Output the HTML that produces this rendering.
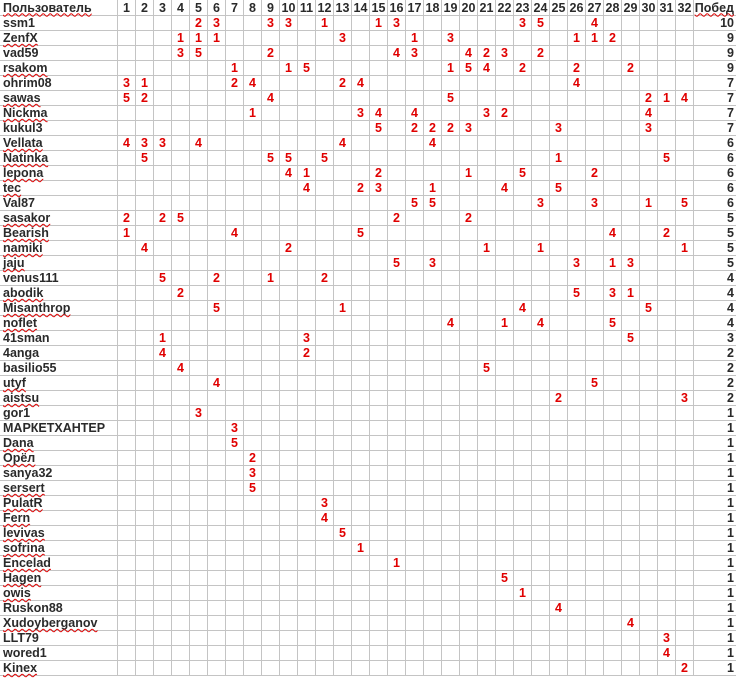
<!DOCTYPE html>
<html><head><meta charset="utf-8"><style>
html,body{margin:0;padding:0;background:#fff;width:736px;height:678px;overflow:hidden}
table{border-collapse:collapse;table-layout:fixed;width:737px;font-family:"Liberation Sans",Arial,sans-serif;font-weight:bold;font-size:12.5px;margin-left:-1px}
td,th{border:1px solid #c4c4c4;height:14px;padding:0;line-height:14px;text-align:center;color:#e00000;white-space:nowrap}
td{overflow:hidden}
th{text-align:left;color:#2a2a2a;padding-left:3px;font-weight:bold;overflow:visible}
td.w{text-align:right;color:#2a2a2a;padding-right:2px;overflow:visible}
tr.h td{color:#2a2a2a;height:15px}
tr.h th{height:15px}
tr:first-child td,tr:first-child th{border-top:none}
th{border-left:1px solid #333}
.u{text-decoration:underline wavy #e00000;text-decoration-thickness:1px;text-underline-offset:1px;text-decoration-skip-ink:none}
</style></head><body>
<table>
<colgroup><col style="width:118px"><col span="32" style="width:18px"><col style="width:43px"></colgroup>
<tr class="h"><th><span class="u">Пользователь</span></th><td>1<td>2<td>3<td>4<td>5<td>6<td>7<td>8<td>9<td>10<td>11<td>12<td>13<td>14<td>15<td>16<td>17<td>18<td>19<td>20<td>21<td>22<td>23<td>24<td>25<td>26<td>27<td>28<td>29<td>30<td>31<td>32<td class="w"><span class="u">Побед</span></td></tr>
<tr><th>ssm1</th><td><td><td><td><td>2<td>3<td><td><td>3<td>3<td><td>1<td><td><td>1<td>3<td><td><td><td><td><td><td>3<td>5<td><td><td>4<td><td><td><td><td><td class="w">10</td></tr>
<tr><th><span class="u">ZenfX</span></th><td><td><td><td>1<td>1<td>1<td><td><td><td><td><td><td>3<td><td><td><td>1<td><td>3<td><td><td><td><td><td><td>1<td>1<td>2<td><td><td><td><td class="w">9</td></tr>
<tr><th>vad59</th><td><td><td><td>3<td>5<td><td><td><td>2<td><td><td><td><td><td><td>4<td>3<td><td><td>4<td>2<td>3<td><td>2<td><td><td><td><td><td><td><td><td class="w">9</td></tr>
<tr><th><span class="u">rsakom</span></th><td><td><td><td><td><td><td>1<td><td><td>1<td>5<td><td><td><td><td><td><td><td>1<td>5<td>4<td><td>2<td><td><td>2<td><td><td>2<td><td><td><td class="w">9</td></tr>
<tr><th>ohrim08</th><td>3<td>1<td><td><td><td><td>2<td>4<td><td><td><td><td>2<td>4<td><td><td><td><td><td><td><td><td><td><td><td>4<td><td><td><td><td><td><td class="w">7</td></tr>
<tr><th><span class="u">sawas</span></th><td>5<td>2<td><td><td><td><td><td><td>4<td><td><td><td><td><td><td><td><td><td>5<td><td><td><td><td><td><td><td><td><td><td>2<td>1<td>4<td class="w">7</td></tr>
<tr><th><span class="u">Nickma</span></th><td><td><td><td><td><td><td><td>1<td><td><td><td><td><td>3<td>4<td><td>4<td><td><td><td>3<td>2<td><td><td><td><td><td><td><td>4<td><td><td class="w">7</td></tr>
<tr><th>kukul3</th><td><td><td><td><td><td><td><td><td><td><td><td><td><td><td>5<td><td>2<td>2<td>2<td>3<td><td><td><td><td>3<td><td><td><td><td>3<td><td><td class="w">7</td></tr>
<tr><th><span class="u">Vellata</span></th><td>4<td>3<td>3<td><td>4<td><td><td><td><td><td><td><td>4<td><td><td><td><td>4<td><td><td><td><td><td><td><td><td><td><td><td><td><td><td class="w">6</td></tr>
<tr><th><span class="u">Natinka</span></th><td><td>5<td><td><td><td><td><td><td>5<td>5<td><td>5<td><td><td><td><td><td><td><td><td><td><td><td><td>1<td><td><td><td><td><td>5<td><td class="w">6</td></tr>
<tr><th><span class="u">lepona</span></th><td><td><td><td><td><td><td><td><td><td>4<td>1<td><td><td><td>2<td><td><td><td><td>1<td><td><td>5<td><td><td><td>2<td><td><td><td><td><td class="w">6</td></tr>
<tr><th><span class="u">tec</span></th><td><td><td><td><td><td><td><td><td><td><td>4<td><td><td>2<td>3<td><td><td>1<td><td><td><td>4<td><td><td>5<td><td><td><td><td><td><td><td class="w">6</td></tr>
<tr><th>Val87</th><td><td><td><td><td><td><td><td><td><td><td><td><td><td><td><td><td>5<td>5<td><td><td><td><td><td>3<td><td><td>3<td><td><td>1<td><td>5<td class="w">6</td></tr>
<tr><th><span class="u">sasakor</span></th><td>2<td><td>2<td>5<td><td><td><td><td><td><td><td><td><td><td><td>2<td><td><td><td>2<td><td><td><td><td><td><td><td><td><td><td><td><td class="w">5</td></tr>
<tr><th><span class="u">Bearish</span></th><td>1<td><td><td><td><td><td>4<td><td><td><td><td><td><td>5<td><td><td><td><td><td><td><td><td><td><td><td><td><td>4<td><td><td>2<td><td class="w">5</td></tr>
<tr><th><span class="u">namiki</span></th><td><td>4<td><td><td><td><td><td><td><td>2<td><td><td><td><td><td><td><td><td><td><td>1<td><td><td>1<td><td><td><td><td><td><td><td>1<td class="w">5</td></tr>
<tr><th><span class="u">jaju</span></th><td><td><td><td><td><td><td><td><td><td><td><td><td><td><td><td>5<td><td>3<td><td><td><td><td><td><td><td>3<td><td>1<td>3<td><td><td><td class="w">5</td></tr>
<tr><th>venus111</th><td><td><td>5<td><td><td>2<td><td><td>1<td><td><td>2<td><td><td><td><td><td><td><td><td><td><td><td><td><td><td><td><td><td><td><td><td class="w">4</td></tr>
<tr><th><span class="u">abodik</span></th><td><td><td><td>2<td><td><td><td><td><td><td><td><td><td><td><td><td><td><td><td><td><td><td><td><td><td>5<td><td>3<td>1<td><td><td><td class="w">4</td></tr>
<tr><th><span class="u">Misanthrop</span></th><td><td><td><td><td><td>5<td><td><td><td><td><td><td>1<td><td><td><td><td><td><td><td><td><td>4<td><td><td><td><td><td><td>5<td><td><td class="w">4</td></tr>
<tr><th><span class="u">noflet</span></th><td><td><td><td><td><td><td><td><td><td><td><td><td><td><td><td><td><td><td>4<td><td><td>1<td><td>4<td><td><td><td>5<td><td><td><td><td class="w">4</td></tr>
<tr><th>41sman</th><td><td><td>1<td><td><td><td><td><td><td><td>3<td><td><td><td><td><td><td><td><td><td><td><td><td><td><td><td><td><td>5<td><td><td><td class="w">3</td></tr>
<tr><th>4anga</th><td><td><td>4<td><td><td><td><td><td><td><td>2<td><td><td><td><td><td><td><td><td><td><td><td><td><td><td><td><td><td><td><td><td><td class="w">2</td></tr>
<tr><th>basilio55</th><td><td><td><td>4<td><td><td><td><td><td><td><td><td><td><td><td><td><td><td><td><td>5<td><td><td><td><td><td><td><td><td><td><td><td class="w">2</td></tr>
<tr><th><span class="u">utyf</span></th><td><td><td><td><td><td>4<td><td><td><td><td><td><td><td><td><td><td><td><td><td><td><td><td><td><td><td><td>5<td><td><td><td><td><td class="w">2</td></tr>
<tr><th><span class="u">aistsu</span></th><td><td><td><td><td><td><td><td><td><td><td><td><td><td><td><td><td><td><td><td><td><td><td><td><td>2<td><td><td><td><td><td><td>3<td class="w">2</td></tr>
<tr><th>gor1</th><td><td><td><td><td>3<td><td><td><td><td><td><td><td><td><td><td><td><td><td><td><td><td><td><td><td><td><td><td><td><td><td><td><td class="w">1</td></tr>
<tr><th>МАРКЕТХАНТЕР</th><td><td><td><td><td><td><td>3<td><td><td><td><td><td><td><td><td><td><td><td><td><td><td><td><td><td><td><td><td><td><td><td><td><td class="w">1</td></tr>
<tr><th><span class="u">Dana</span></th><td><td><td><td><td><td><td>5<td><td><td><td><td><td><td><td><td><td><td><td><td><td><td><td><td><td><td><td><td><td><td><td><td><td class="w">1</td></tr>
<tr><th><span class="u">Орёл</span></th><td><td><td><td><td><td><td><td>2<td><td><td><td><td><td><td><td><td><td><td><td><td><td><td><td><td><td><td><td><td><td><td><td><td class="w">1</td></tr>
<tr><th>sanya32</th><td><td><td><td><td><td><td><td>3<td><td><td><td><td><td><td><td><td><td><td><td><td><td><td><td><td><td><td><td><td><td><td><td><td class="w">1</td></tr>
<tr><th><span class="u">sersert</span></th><td><td><td><td><td><td><td><td>5<td><td><td><td><td><td><td><td><td><td><td><td><td><td><td><td><td><td><td><td><td><td><td><td><td class="w">1</td></tr>
<tr><th><span class="u">PulatR</span></th><td><td><td><td><td><td><td><td><td><td><td><td>3<td><td><td><td><td><td><td><td><td><td><td><td><td><td><td><td><td><td><td><td><td class="w">1</td></tr>
<tr><th><span class="u">Fern</span></th><td><td><td><td><td><td><td><td><td><td><td><td>4<td><td><td><td><td><td><td><td><td><td><td><td><td><td><td><td><td><td><td><td><td class="w">1</td></tr>
<tr><th><span class="u">levivas</span></th><td><td><td><td><td><td><td><td><td><td><td><td><td>5<td><td><td><td><td><td><td><td><td><td><td><td><td><td><td><td><td><td><td><td class="w">1</td></tr>
<tr><th><span class="u">sofrina</span></th><td><td><td><td><td><td><td><td><td><td><td><td><td><td>1<td><td><td><td><td><td><td><td><td><td><td><td><td><td><td><td><td><td><td class="w">1</td></tr>
<tr><th><span class="u">Encelad</span></th><td><td><td><td><td><td><td><td><td><td><td><td><td><td><td><td>1<td><td><td><td><td><td><td><td><td><td><td><td><td><td><td><td><td class="w">1</td></tr>
<tr><th><span class="u">Hagen</span></th><td><td><td><td><td><td><td><td><td><td><td><td><td><td><td><td><td><td><td><td><td><td>5<td><td><td><td><td><td><td><td><td><td><td class="w">1</td></tr>
<tr><th><span class="u">owis</span></th><td><td><td><td><td><td><td><td><td><td><td><td><td><td><td><td><td><td><td><td><td><td><td>1<td><td><td><td><td><td><td><td><td><td class="w">1</td></tr>
<tr><th>Ruskon88</th><td><td><td><td><td><td><td><td><td><td><td><td><td><td><td><td><td><td><td><td><td><td><td><td><td>4<td><td><td><td><td><td><td><td class="w">1</td></tr>
<tr><th><span class="u">Xudoyberganov</span></th><td><td><td><td><td><td><td><td><td><td><td><td><td><td><td><td><td><td><td><td><td><td><td><td><td><td><td><td><td>4<td><td><td><td class="w">1</td></tr>
<tr><th>LLT79</th><td><td><td><td><td><td><td><td><td><td><td><td><td><td><td><td><td><td><td><td><td><td><td><td><td><td><td><td><td><td><td>3<td><td class="w">1</td></tr>
<tr><th>wored1</th><td><td><td><td><td><td><td><td><td><td><td><td><td><td><td><td><td><td><td><td><td><td><td><td><td><td><td><td><td><td><td>4<td><td class="w">1</td></tr>
<tr><th><span class="u">Kinex</span></th><td><td><td><td><td><td><td><td><td><td><td><td><td><td><td><td><td><td><td><td><td><td><td><td><td><td><td><td><td><td><td><td>2<td class="w">1</td></tr>
</table>
</body></html>
